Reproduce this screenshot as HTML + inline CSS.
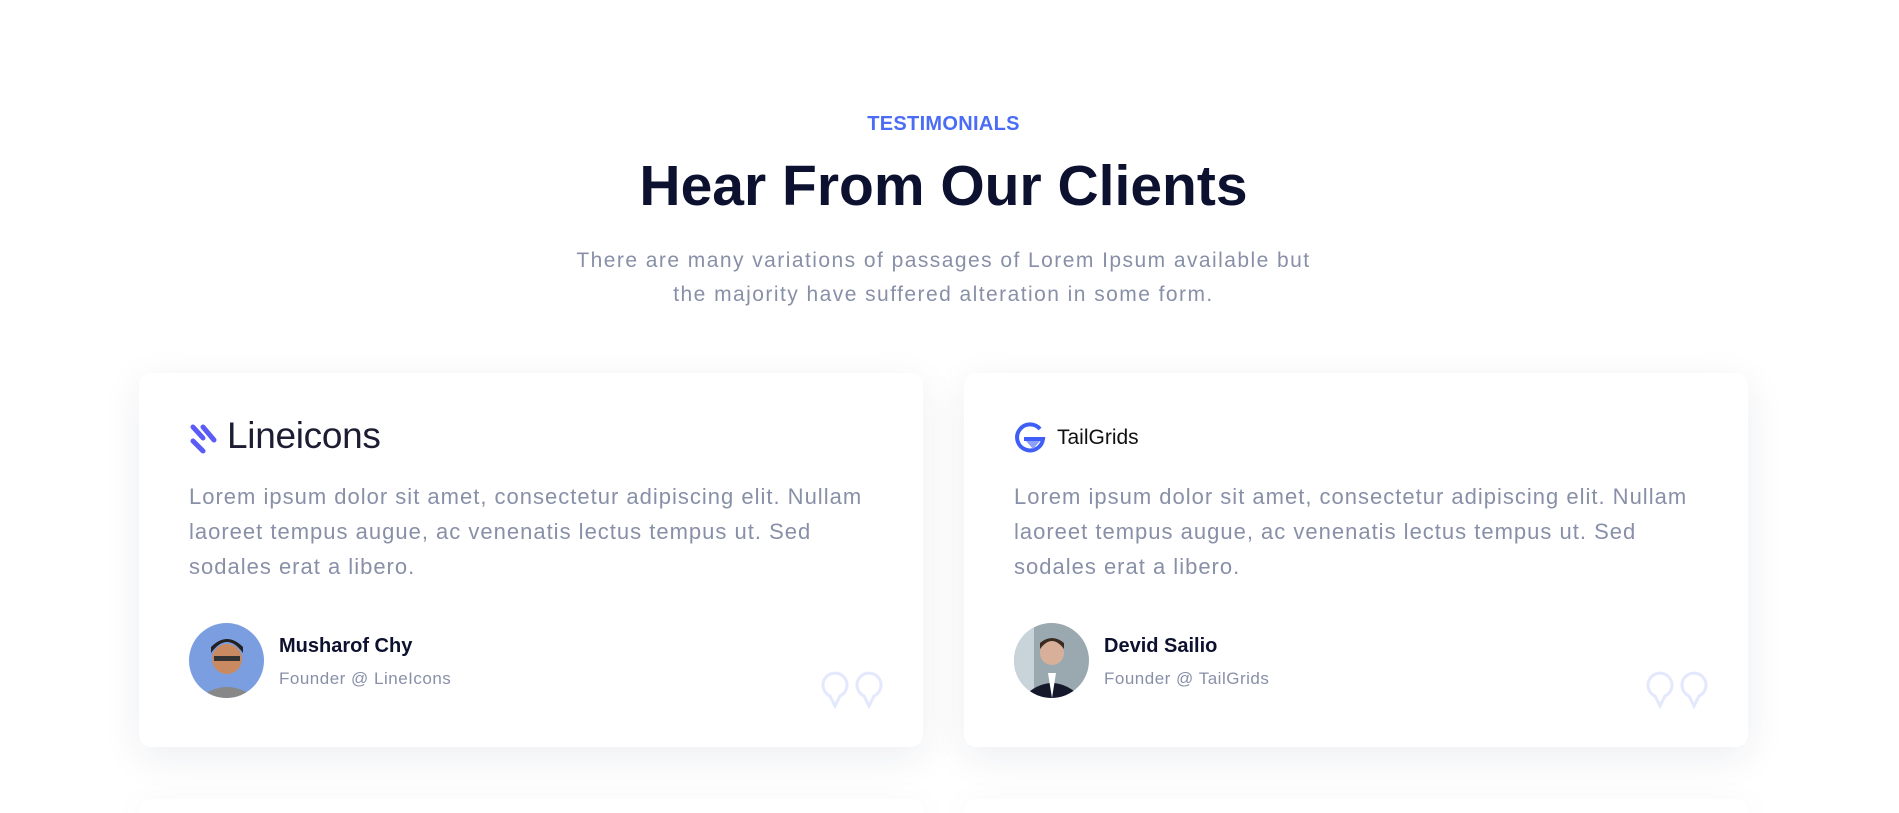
<!DOCTYPE html>
<html><head><meta charset="utf-8"><style>
*{margin:0;padding:0;box-sizing:border-box}
html,body{width:1899px;height:813px;overflow:hidden}
body{background:#fff;font-family:"Liberation Sans",sans-serif;position:relative}
.c{position:absolute;left:0;width:1887px;text-align:center}
.card{position:absolute;width:784px;height:374px;background:#fff;border-radius:12px;box-shadow:0 10px 40px rgba(30,40,80,0.08)}
.txt{position:absolute;left:50px;top:106px;width:720px;font-size:22px;line-height:35px;color:#8890a8;letter-spacing:1.0px;white-space:nowrap}
.av{position:absolute;left:50px;top:250px;width:75px;height:75px;border-radius:50%;overflow:hidden}
.nm{position:absolute;left:140px;top:262px;font-size:20px;font-weight:bold;color:#0d1130}
.rl{position:absolute;left:140px;top:296px;font-size:17px;color:#8890a8;letter-spacing:0.5px}
.q{position:absolute;left:682px;top:298px}
</style></head><body>
<div class="c" style="top:113px;font-size:20px;font-weight:bold;color:#4a6cf7;letter-spacing:0.3px">TESTIMONIALS</div>
<div class="c" style="top:153px;font-size:57px;font-weight:bold;color:#0d1130">Hear From Our Clients</div>
<div class="c" style="top:244px;font-size:21px;line-height:34px;color:#8890a8;letter-spacing:1.45px">There are many variations of passages of Lorem Ipsum available but<br>the majority have suffered alteration in some form.</div>

<div class="card" style="left:139px;top:373px">
  <svg style="position:absolute;left:50px;top:50px" width="28" height="32" viewBox="0 0 28 32"><g stroke="#5b5cf6" stroke-width="5" stroke-linecap="round"><line x1="4" y1="4" x2="14" y2="15"/><line x1="14" y1="4" x2="25" y2="17"/><line x1="4" y1="18" x2="14" y2="28"/></g></svg>
  <div style="position:absolute;left:88px;top:42px;font-size:37px;color:#1c1d33;letter-spacing:-0.3px">Lineicons</div>
  <div class="txt">Lorem ipsum dolor sit amet, consectetur adipiscing elit. Nullam<br>laoreet tempus augue, ac venenatis lectus tempus ut. Sed<br>sodales erat a libero.</div>
  <div class="av"><svg width="75" height="75"><rect width="75" height="75" fill="#7b9ee0"/><circle cx="38" cy="36" r="15" fill="#c98a62"/><path d="M22 30 q16-22 32 0 l0-6 q-16-16-32 0z" fill="#222"/><rect x="25" y="33" width="26" height="5" fill="#333"/><path d="M10 75 q28-22 56 0z" fill="#888"/></svg></div>
  <div class="nm">Musharof Chy</div>
  <div class="rl">Founder @ LineIcons</div>
  <svg class="q" width="64" height="38" viewBox="0 0 64 38"><g fill="none" stroke="#e3e8fd" stroke-width="3"><path d="M14 35 L9 25 A12 12 0 1 1 19 25 Z"/><path d="M48 35 L43 25 A12 12 0 1 1 53 25 Z"/></g></svg>
</div>

<div class="card" style="left:964px;top:373px">
  <svg style="position:absolute;left:50px;top:49px" width="32" height="32" viewBox="0 0 32 32"><path d="M26 7 A13 13 0 1 0 29 17 L10 17" fill="none" stroke="#3f5ef5" stroke-width="4"/><path d="M12 19 L26 19 L19 27 Z" fill="#8da0f8"/></svg>
  <div style="position:absolute;left:93px;top:53px;font-size:21px;color:#111">TailGrids</div>
  <div class="txt">Lorem ipsum dolor sit amet, consectetur adipiscing elit. Nullam<br>laoreet tempus augue, ac venenatis lectus tempus ut. Sed<br>sodales erat a libero.</div>
  <div class="av"><svg width="75" height="75"><rect width="75" height="75" fill="#9aa8b0"/><rect x="0" y="0" width="20" height="75" fill="#c8d4da"/><circle cx="38" cy="30" r="12" fill="#d8b09a"/><path d="M26 26 q12-16 24 0 l0-6 q-12-10-24 0z" fill="#3a2a20"/><path d="M8 75 q30-30 60 0z" fill="#14182a"/><path d="M34 50 l4 25 l4-25z" fill="#fff"/></svg></div>
  <div class="nm">Devid Sailio</div>
  <div class="rl">Founder @ TailGrids</div>
  <svg class="q" width="64" height="38" viewBox="0 0 64 38"><g fill="none" stroke="#e3e8fd" stroke-width="3"><path d="M14 35 L9 25 A12 12 0 1 1 19 25 Z"/><path d="M48 35 L43 25 A12 12 0 1 1 53 25 Z"/></g></svg>
</div>

<div class="card" style="left:139px;top:799px;height:14px;border-radius:12px 12px 0 0"></div>
<div class="card" style="left:964px;top:799px;height:14px;border-radius:12px 12px 0 0"></div>
</body></html>
